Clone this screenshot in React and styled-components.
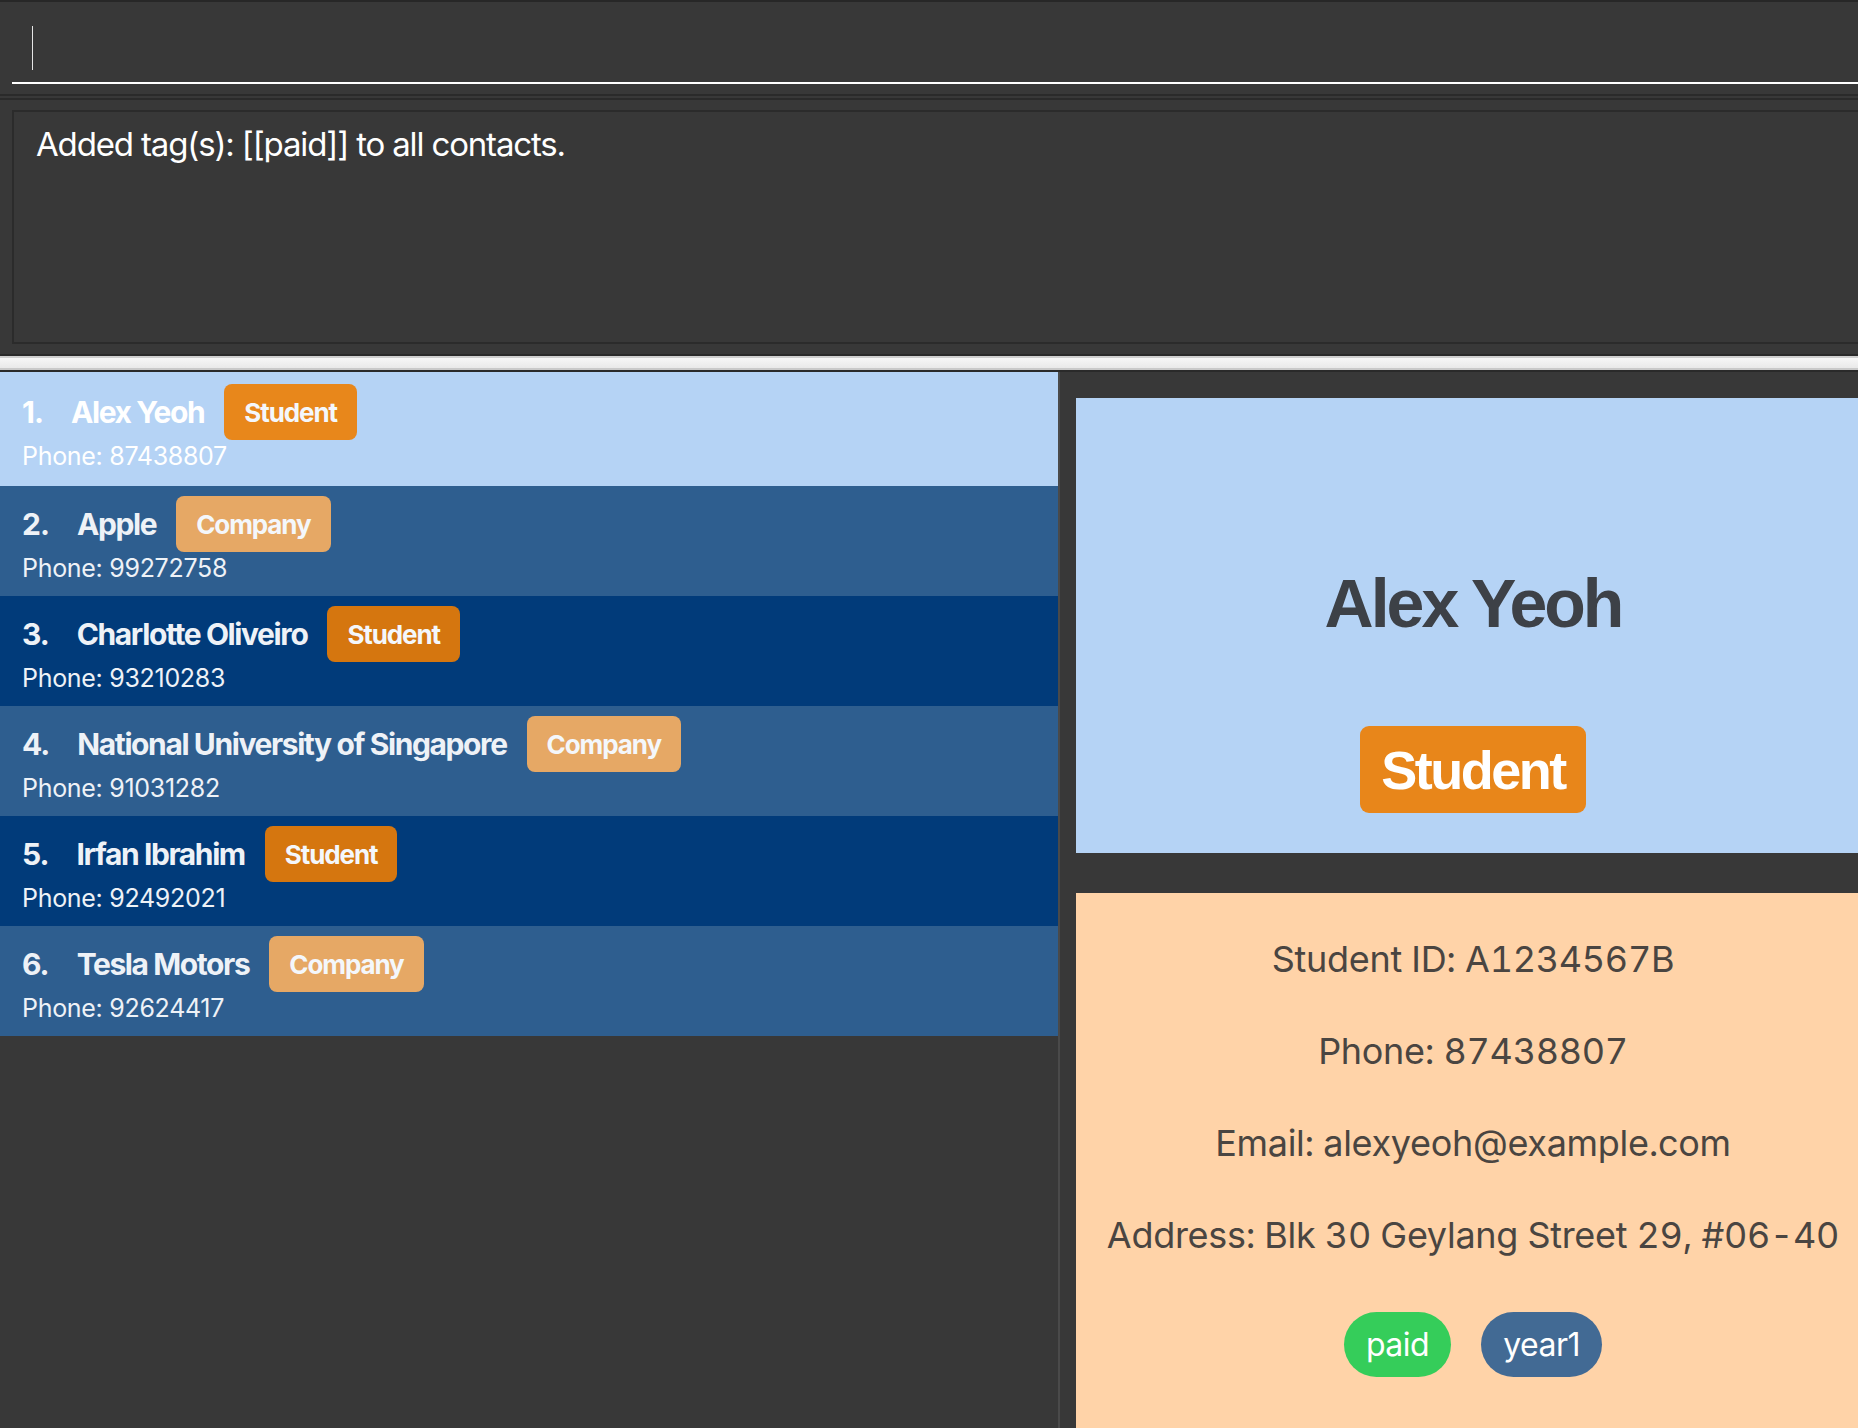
import React from "react";
import styled, { createGlobalStyle } from "styled-components";

const GlobalStyle = createGlobalStyle`
  html, body { margin: 0; padding: 0; background: #383838; }
  body { font-family: Inter, "Noto Sans", sans-serif; }
  * { box-sizing: border-box; }
`;

const Window = styled.div`
  width: 1858px;
  height: 1428px;
  overflow: hidden;
  background: #383838;
  display: flex;
  flex-direction: column;
`;

const CommandBar = styled.div`
  height: 94px;
  border-top: 2px solid #272727;
  padding-left: 12px;
  flex-shrink: 0;
`;

const CommandInput = styled.div`
  height: 82px;
  border-bottom: 2px solid #ffffff;
  padding: 24px 0 0 20px;
`;

const Caret = styled.div`
  width: 1px;
  height: 44px;
  background: #e6e6e6;
`;

const Rule = styled.div`
  height: ${(p) => p.$h || 2}px;
  background: ${(p) => p.$c || "#2a2a2a"};
  flex-shrink: 0;
`;

const Gap = styled.div`
  height: ${(p) => p.$h}px;
  flex-shrink: 0;
`;

const ResultPane = styled.div`
  padding: 10px 0 10px 12px;
  flex-shrink: 0;
`;

const ResultBox = styled.div`
  height: 234px;
  border: 2px solid #2b2b2b;
  border-right: none;
  padding: 12px 0 0 22px;
  color: #ffffff;
  font-size: 33px;
  letter-spacing: -1.15px;
  line-height: 40px;
`;

const Splitter = styled.div`
  height: 18px;
  flex-shrink: 0;
  border-top: 2px solid #2a2a2a;
  border-bottom: 2px solid #2a2a2a;
  background: linear-gradient(#cfcfcf 0 2px, #f7f7f7 2px, #e9e9e9 12px, #c9c9c9 12px);
`;

const Main = styled.div`
  flex: 1;
  display: flex;
  min-height: 0;
`;

const ListPane = styled.div`
  width: 1058px;
  flex-shrink: 0;
  display: flex;
  flex-direction: column;
`;

const Row = styled.div`
  background: ${(p) => p.$bg};
  color: ${(p) => (p.$selected ? "#ffffff" : "#eef2f7")};
  padding: ${(p) => (p.$selected ? "12px 22px 14px" : "10px 22px 12px")};
  display: flex;
  flex-direction: column;
`;

const RowHead = styled.div`
  height: 56px;
  display: flex;
  align-items: center;
`;

const Index = styled.span`
  font-weight: 700;
  font-size: 30px;
  letter-spacing: -1px;
  margin-right: 28px;
  flex-shrink: 0;
`;

const Name = styled.span`
  font-weight: 700;
  font-size: 30px;
  letter-spacing: -1.4px;
  margin-right: 20px;
`;

const Badge = styled.span`
  height: 56px;
  padding: 0 20px;
  border-radius: 8px;
  display: inline-flex;
  align-items: center;
  background: ${(p) => p.$bg};
  color: #f4f7fb;
  font-weight: 700;
  font-size: 26px;
  letter-spacing: -1.1px;
`;

const Phone = styled.div`
  font-size: 25px;
  line-height: 32px;
  letter-spacing: -0.3px;
`;

const Divider = styled.div`
  width: 2px;
  flex-shrink: 0;
  background: #4a4a4a;
`;

const DetailPane = styled.div`
  flex: 1;
  padding: 26px 0 0 16px;
  margin-right: -12px;
  display: flex;
  flex-direction: column;
  gap: 40px;
`;

const HeaderCard = styled.div`
  height: 455px;
  background: #b5d3f5;
  display: flex;
  flex-direction: column;
  align-items: center;
  padding-top: 166px;
  flex-shrink: 0;
`;

const BigName = styled.div`
  font-family: "Liberation Sans", Arial, sans-serif;
  font-weight: 700;
  font-size: 68px;
  line-height: 78px;
  letter-spacing: -3px;
  color: #3d4147;
`;

const BigBadge = styled.div`
  margin-top: 84px;
  height: 87px;
  padding: 0 21px;
  border-radius: 9px;
  background: #e8861a;
  color: #ffffff;
  display: flex;
  align-items: center;
  font-family: "Liberation Sans", Arial, sans-serif;
  font-weight: 700;
  font-size: 54px;
  letter-spacing: -2.5px;
`;

const InfoCard = styled.div`
  flex: 1;
  background: #ffd3a8;
  display: flex;
  flex-direction: column;
  align-items: center;
  padding-top: 45px;
  gap: 49px;
  color: #4a4541;
`;

const InfoLine = styled.div`
  font-size: 36px;
  line-height: 43px;
  letter-spacing: -0.3px;
  font-variant-numeric: tabular-nums;
`;

const TagRow = styled.div`
  display: flex;
  gap: 30px;
  margin-top: 6px;
`;

const Pill = styled.span`
  height: 65px;
  padding: 0 22px;
  border-radius: 33px;
  background: ${(p) => p.$bg};
  color: #ffffff;
  display: inline-flex;
  align-items: center;
  font-size: 32px;
  letter-spacing: -0.5px;
`;

const contacts = [
  { name: "Alex Yeoh", type: "Student", phone: "87438807" },
  { name: "Apple", type: "Company", phone: "99272758" },
  { name: "Charlotte Oliveiro", type: "Student", phone: "93210283" },
  { name: "National University of Singapore", type: "Company", phone: "91031282" },
  { name: "Irfan Ibrahim", type: "Student", phone: "92492021" },
  { name: "Tesla Motors", type: "Company", phone: "92624417" },
];

function rowBg(i) {
  if (i === 0) return "#b5d3f5";
  return i % 2 === 1 ? "#2e5e8f" : "#013b7a";
}

function badgeBg(type, i) {
  if (type === "Company") return "#e6a865";
  return i === 0 ? "#e8871b" : "#d5760f";
}

export default function App() {
  return (
    <>
      <GlobalStyle />
      <Window>
        <CommandBar>
          <CommandInput>
            <Caret />
          </CommandInput>
        </CommandBar>
        <Rule />
        <Gap $h={2} />
        <Rule />
        <ResultPane>
          <ResultBox>Added tag(s): [[paid]] to all contacts.</ResultBox>
        </ResultPane>
        <Splitter />
        <Main>
          <ListPane>
            {contacts.map((c, i) => (
              <Row key={c.name} $bg={rowBg(i)} $selected={i === 0}>
                <RowHead>
                  <Index>{i + 1}.</Index>
                  <Name>{c.name}</Name>
                  <Badge $bg={badgeBg(c.type, i)}>{c.type}</Badge>
                </RowHead>
                <Phone>Phone: {c.phone}</Phone>
              </Row>
            ))}
          </ListPane>
          <Divider />
          <DetailPane>
            <HeaderCard>
              <BigName>Alex Yeoh</BigName>
              <BigBadge>Student</BigBadge>
            </HeaderCard>
            <InfoCard>
              <InfoLine>Student ID: A1234567B</InfoLine>
              <InfoLine>Phone: 87438807</InfoLine>
              <InfoLine>Email: alexyeoh@example.com</InfoLine>
              <InfoLine>Address: Blk 30 Geylang Street 29, #06-40</InfoLine>
              <TagRow>
                <Pill $bg="#35cd5a">paid</Pill>
                <Pill $bg="#426a94">year1</Pill>
              </TagRow>
            </InfoCard>
          </DetailPane>
        </Main>
      </Window>
    </>
  );
}
